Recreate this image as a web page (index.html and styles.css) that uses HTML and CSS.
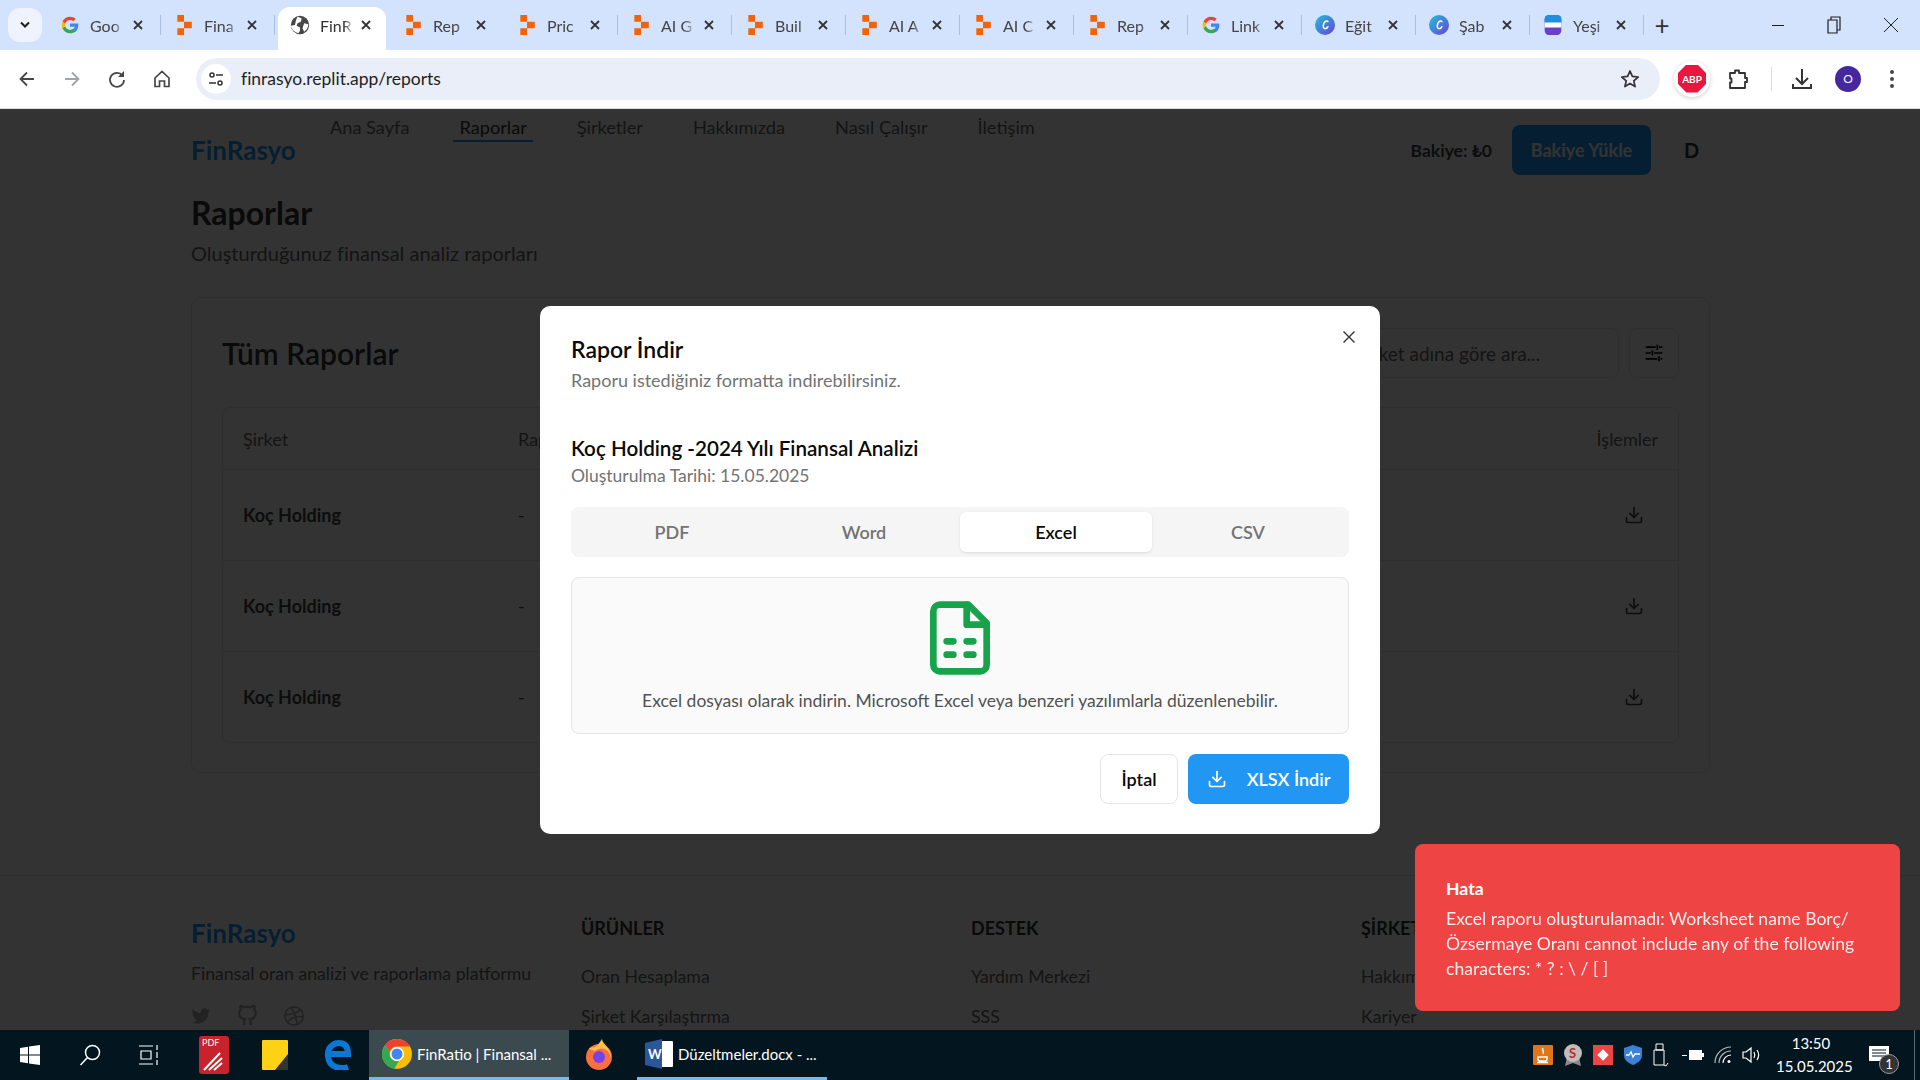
FILE: index.html
```html
<!DOCTYPE html>
<html lang="tr">

<head>
    <meta charset="UTF-8">
    <title>FinRatio | Finansal Analiz</title>
    <link rel="stylesheet" href="styles.css">
</head>

<body>
    <svg class="defs" width="0" height="0">
        <defs>
            <linearGradient id="canva-grad" x1="0" y1="0" x2="1" y2="1">
                <stop offset="0" stop-color="#1fc3d8" />
                <stop offset="1" stop-color="#6b3fd8" />
            </linearGradient>
        </defs>
        <symbol id="ic-replit" viewBox="0 0 16 18">
            <path fill="#f26207" d="M2 0h6v6H2zM8 6h7v6H8zM2 12h6v6H2z" />
        </symbol>
        <symbol id="ic-google" viewBox="0 0 24 24">
            <path fill="#4285f4" d="M22 12.2c0-.7-.1-1.400-.2-2H12v3.900h5.600c-.3 1.300-1 2.400-2.100 3.100v2.600h3.400c2-1.800 3.100-4.500 3.100-7.600z" />
            <path fill="#34a853" d="M12 22c2.800 0 5.100-.9 6.900-2.500l-3.400-2.600c-.9.600-2.100 1-3.500 1-2.700 0-5-1.800-5.800-4.300H3.100v2.700C4.800 19.800 8.200 22 12 22z" />
            <path fill="#fbbc05" d="M6.200 13.600c-.4-1.100-.4-2.200 0-3.300V7.600H3.100c-1.400 2.800-1.400 6 0 8.700z" />
            <path fill="#ea4335" d="M12 6c1.500 0 2.900.5 4 1.500l3-3C17.100 2.900 14.700 2 12 2 8.200 2 4.800 4.200 3.100 7.600l3.100 2.700C7 7.800 9.300 6 12 6z" />
        </symbol>
        <symbol id="ic-canva" viewBox="0 0 24 24">
            <circle cx="12" cy="12" r="12" fill="url(#canva-grad)" />
            <path fill="none" stroke="#fff" stroke-width="1.800" stroke-linecap="round" d="M15.500 8c-1-1.500-4-.5-5 2.500s-.5 6 1.500 6 3-1.500 3.500-2.500" />
        </symbol>
        <symbol id="ic-close" viewBox="0 0 12 12">
            <path fill="none" stroke="currentColor" stroke-width="1.800" d="M2 2l8 8M10 2l-8 8" />
        </symbol>
        <symbol id="ic-download" viewBox="0 0 24 24">
            <g fill="none" stroke="currentColor" stroke-width="2" stroke-linecap="round" stroke-linejoin="round">
                <path d="M21 15v4a2 2 0 0 1-2 2H5a2 2 0 0 1-2-2v-4" />
                <path d="M7 10l5 5 5-5" />
                <path d="M12 15V3" />
            </g>
        </symbol>
    </svg>

    <!-- sekmeler -->
    <div class="tabstrip">
        <button class="tab-search">
            <svg width="12" height="8" viewBox="0 0 12 8"><path fill="none" stroke="#1f1f1f" stroke-width="2" d="M2 1.500l4 4 4-4" /></svg>
        </button>
        <div class="tab"><svg class="tab-icon"><use href="#ic-google" /></svg><span class="tab-title">Goo</span><svg class="tab-x"><use href="#ic-close" /></svg></div>
        <div class="tab"><svg class="tab-icon"><use href="#ic-replit" /></svg><span class="tab-title">Fina</span><svg class="tab-x"><use href="#ic-close" /></svg></div>
        <div class="tab active">
            <svg class="tab-icon" viewBox="0 0 24 24"><circle cx="12" cy="12" r="11" fill="#474747" /><path fill="#fff" d="M9 2l5 2-1 4-4 2-1 3 4 2v4l-2 3c-4-1-8-4-9-9l5-1 1-5z M17 10l5 1c0 4-2 7-5 9l-2-4z" /></svg>
            <span class="tab-title">FinR</span><svg class="tab-x"><use href="#ic-close" /></svg>
        </div>
        <div class="tab no-sep"><svg class="tab-icon"><use href="#ic-replit" /></svg><span class="tab-title">Rep</span><svg class="tab-x"><use href="#ic-close" /></svg></div>
        <div class="tab"><svg class="tab-icon"><use href="#ic-replit" /></svg><span class="tab-title">Pric</span><svg class="tab-x"><use href="#ic-close" /></svg></div>
        <div class="tab"><svg class="tab-icon"><use href="#ic-replit" /></svg><span class="tab-title">AI G</span><svg class="tab-x"><use href="#ic-close" /></svg></div>
        <div class="tab"><svg class="tab-icon"><use href="#ic-replit" /></svg><span class="tab-title">Buil</span><svg class="tab-x"><use href="#ic-close" /></svg></div>
        <div class="tab"><svg class="tab-icon"><use href="#ic-replit" /></svg><span class="tab-title">AI A</span><svg class="tab-x"><use href="#ic-close" /></svg></div>
        <div class="tab"><svg class="tab-icon"><use href="#ic-replit" /></svg><span class="tab-title">AI C</span><svg class="tab-x"><use href="#ic-close" /></svg></div>
        <div class="tab"><svg class="tab-icon"><use href="#ic-replit" /></svg><span class="tab-title">Rep</span><svg class="tab-x"><use href="#ic-close" /></svg></div>
        <div class="tab"><svg class="tab-icon"><use href="#ic-google" /></svg><span class="tab-title">Link</span><svg class="tab-x"><use href="#ic-close" /></svg></div>
        <div class="tab"><svg class="tab-icon"><use href="#ic-canva" /></svg><span class="tab-title">Eğit</span><svg class="tab-x"><use href="#ic-close" /></svg></div>
        <div class="tab"><svg class="tab-icon"><use href="#ic-canva" /></svg><span class="tab-title">Şab</span><svg class="tab-x"><use href="#ic-close" /></svg></div>
        <div class="tab">
            <svg class="tab-icon" viewBox="0 0 24 24"><rect x="2" y="0" width="20" height="24" rx="5" fill="#6b3fc8" /><path fill="#1f8fe0" d="M2 5a5 5 0 0 1 5-5h10a5 5 0 0 1 5 5v5H2z" /><rect x="2" y="9" width="20" height="6" fill="#fff" /></svg>
            <span class="tab-title">Yeşi</span><svg class="tab-x"><use href="#ic-close" /></svg>
        </div>
        <button class="tab-new">+</button>
        <div class="win-controls">
            <svg width="14" height="14" viewBox="0 0 14 14"><path stroke="#1f1f1f" d="M1 7.500h12" /></svg>
            <svg width="14" height="18" viewBox="0 0 14 18"><path fill="none" stroke="#1f1f1f" stroke-width="1.200" d="M1 4h9v13H1zM4 4V1h9v13h-3" /></svg>
            <svg width="16" height="16" viewBox="0 0 16 16"><path stroke="#1f1f1f" d="M1 1l14 14M15 1L1 15" /></svg>
        </div>
    </div>

    <!-- adres cubugu -->
    <div class="toolbar">
        <div class="nav-btns">
            <svg width="20" height="20" viewBox="0 0 20 20"><path fill="none" stroke="#474747" stroke-width="1.800" d="M17 10H4M10 3.500L3.500 10l6.500 6.500" /></svg>
            <svg width="20" height="20" viewBox="0 0 20 20"><path fill="none" stroke="#a0a4aa" stroke-width="1.800" d="M3 10h13M10 3.500l6.500 6.500-6.500 6.500" /></svg>
            <svg width="20" height="20" viewBox="0 0 20 20"><path fill="none" stroke="#474747" stroke-width="1.800" d="M15.500 6.500A7 7 0 1 0 17 11" /><path fill="#474747" d="M17 2v6h-6z" /></svg>
            <svg width="20" height="20" viewBox="0 0 20 20"><path fill="none" stroke="#474747" stroke-width="1.700" d="M3 9l7-6.500L17 9v8.500h-4.500V12h-5v5.500H3z" /></svg>
        </div>
        <div class="omnibox">
            <span class="site-info">
                <svg width="16" height="16" viewBox="0 0 16 16"><g fill="none" stroke="#333" stroke-width="1.500"><circle cx="4" cy="4" r="2" /><circle cx="12" cy="12" r="2" /><path d="M8 4h7M1 12h7" /></g></svg>
            </span>
            <span class="url">finrasyo.replit.app/reports</span>
            <svg class="star" width="20" height="20" viewBox="0 0 20 20"><path fill="none" stroke="#333" stroke-width="1.700" stroke-linejoin="round" d="M10 2l2.400 5.400 5.800.6-4.400 3.900 1.300 5.700-5.100-3-5.100 3 1.300-5.700L1.800 8l5.800-.6z" /></svg>
        </div>
        <div class="ext-btns">
            <span class="abp"><i>ABP</i></span>
            <svg class="ext-puzzle" width="24" height="24" viewBox="0 0 24 24"><path fill="none" stroke="#333" stroke-width="1.800" stroke-linejoin="round" d="M4 6h5V3.500h4V6h6v5h2v4h-2v6H4v-5.500h1.500v-4H4z" /></svg>
            <span class="ext-sep"></span>
            <svg class="ext-dl" width="24" height="24" viewBox="0 0 24 24"><path fill="none" stroke="#333" stroke-width="2" d="M12 2v14M6 11l6 6 6-6M3 17v4h18v-4" /></svg>
            <span class="avatar">O</span>
            <svg class="ext-menu" width="6" height="20" viewBox="0 0 6 20"><g fill="#474747"><circle cx="3" cy="3" r="2" /><circle cx="3" cy="10" r="2" /><circle cx="3" cy="17" r="2" /></g></svg>
        </div>
    </div>

    <div class="viewport">
        <div class="site">
            <header class="site-header">
                <div class="logo">FinRasyo</div>
                <nav class="main-nav">
                    <a>Ana Sayfa</a>
                    <a class="current">Raporlar</a>
                    <a>Şirketler</a>
                    <a>Hakkımızda</a>
                    <a>Nasıl Çalışır</a>
                    <a>İletişim</a>
                </nav>
                <div class="balance">Bakiye: ₺0</div>
                <button class="btn-topup">Bakiye Yükle</button>
                <div class="user">D</div>
            </header>

            <h1 class="page-title">Raporlar</h1>
            <p class="page-sub">Oluşturduğunuz finansal analiz raporları</p>

            <section class="report-card">
                <div class="card-top">
                    <h2>Tüm Raporlar</h2>
                    <div class="search">Şirket adına göre ara...</div>
                    <button class="btn-filter">
                        <svg width="20" height="20" viewBox="0 0 24 24"><path fill="none" stroke="#000" stroke-width="2" d="M2 5h12M18 5h4M16 2v6M2 12h6M12 12h10M10 9v6M2 19h14M20 19h2M18 16v6" /></svg>
                    </button>
                </div>
                <div class="report-table">
                    <div class="t-row t-head"><span>Şirket</span><span>Rapor</span><span class="t-end">İşlemler</span></div>
                    <div class="t-row"><b>Koç Holding</b><span>-</span><svg class="t-end" width="20" height="20"><use href="#ic-download" /></svg></div>
                    <div class="t-row"><b>Koç Holding</b><span>-</span><svg class="t-end" width="20" height="20"><use href="#ic-download" /></svg></div>
                    <div class="t-row"><b>Koç Holding</b><span>-</span><svg class="t-end" width="20" height="20"><use href="#ic-download" /></svg></div>
                </div>
            </section>

            <footer class="site-footer">
                <div>
                    <div class="logo">FinRasyo</div>
                    <p class="foot-about">Finansal oran analizi ve raporlama platformu</p>
                    <div class="socials">
                        <svg width="20" height="20" viewBox="0 0 24 24"><path fill="#aaa" d="M23 5c-.8.400-1.700.6-2.600.7.900-.6 1.600-1.400 2-2.500-.9.500-1.900.9-2.900 1.100A4.600 4.600 0 0 0 11.700 8.500 13 13 0 0 1 2.300 3.700a4.600 4.600 0 0 0 1.400 6.100c-.7 0-1.400-.2-2-.6 0 2.200 1.500 4.100 3.700 4.600-.7.200-1.400.2-2.100.1.600 1.800 2.300 3.100 4.300 3.200A9.200 9.200 0 0 1 1 19a13 13 0 0 0 20-11.500c.8-.7 1.500-1.500 2-2.500z" /></svg>
                        <svg width="22" height="24" viewBox="0 0 24 24"><path fill="none" stroke="#aaa" stroke-width="2.400" d="M16 22v-3.900a3.400 3.400 0 0 0-.9-2.600c3.100-.4 6.400-1.500 6.400-7A5.400 5.400 0 0 0 20 4.800 5 5 0 0 0 19.900 1S18.700.6 16 2.500a13.400 13.400 0 0 0-7 0C6.300.6 5.100 1 5.100 1A5 5 0 0 0 5 4.800 5.400 5.400 0 0 0 3.500 8.500c0 5.400 3.300 6.600 6.400 7A3.400 3.400 0 0 0 9 18.100V22" /></svg>
                        <svg width="22" height="22" viewBox="0 0 24 24"><g fill="none" stroke="#aaa" stroke-width="1.800"><circle cx="12" cy="12" r="10" /><path d="M8.600 2.600c3.500 5 6 11 6.900 18.600M19.100 5c-3 3.800-8 5.500-16.900 5.500M21.900 13c-7-1.500-13 1-17.300 6" /></g></svg>
                    </div>
                </div>
                <div class="foot-col">
                    <h4>ÜRÜNLER</h4>
                    <a>Oran Hesaplama</a>
                    <a>Şirket Karşılaştırma</a>
                </div>
                <div class="foot-col">
                    <h4>DESTEK</h4>
                    <a>Yardım Merkezi</a>
                    <a>SSS</a>
                </div>
                <div class="foot-col">
                    <h4>ŞİRKET</h4>
                    <a>Hakkımızda</a>
                    <a>Kariyer</a>
                </div>
            </footer>
        </div>

        <!-- karartma + modal -->
        <div class="overlay">
            <div class="modal">
                <svg class="modal-x" width="14" height="14" viewBox="0 0 14 14"><path fill="none" stroke="#333" stroke-width="1.400" d="M1.500 1.500l11 11M12.500 1.500l-11 11" /></svg>
                <h3>Rapor İndir</h3>
                <p class="muted">Raporu istediğiniz formatta indirebilirsiniz.</p>
                <div class="report-name">Koç Holding -2024 Yılı Finansal Analizi</div>
                <p class="muted date">Oluşturulma Tarihi: 15.05.2025</p>
                <div class="format-tabs">
                    <button>PDF</button>
                    <button>Word</button>
                    <button class="on">Excel</button>
                    <button>CSV</button>
                </div>
                <div class="format-box">
                    <svg width="80" height="80" viewBox="0 0 24 24"><g fill="none" stroke="#16a34a" stroke-width="2" stroke-linecap="round" stroke-linejoin="round"><path d="M14.500 2H6a2 2 0 0 0-2 2v16a2 2 0 0 0 2 2h12a2 2 0 0 0 2-2V7.500z" /><path d="M14 2v6h6" /><path d="M8 13h2M14 13h2M8 17h2M14 17h2" /></g></svg>
                    <p>Excel dosyası olarak indirin. Microsoft Excel veya benzeri yazılımlarla düzenlenebilir.</p>
                </div>
                <div class="modal-actions">
                    <button class="btn-cancel">İptal</button>
                    <button class="btn-download"><svg width="20" height="20"><use href="#ic-download" /></svg>XLSX İndir</button>
                </div>
            </div>
        </div>

        <div class="toast">
            <div class="toast-title">Hata</div>
            <div class="toast-text">Excel raporu oluşturulamadı: Worksheet name Borç/ Özsermaye Oranı cannot include any of the following characters: * ? : \ / [ ]</div>
        </div>
    </div>

    <!-- gorev cubugu -->
    <div class="taskbar">
        <svg class="tb-start" width="20" height="20" viewBox="0 0 20 20"><path fill="#fff" d="M0 3l8-1.200v7.700H0zM9 1.600L20 0v9.500H9zM0 10.500h8v7.700L0 17zM9 10.500h11V20L9 18.400z" /></svg>
        <svg class="tb-search" width="22" height="22" viewBox="0 0 22 22"><g fill="none" stroke="#fff" stroke-width="1.500"><circle cx="13.500" cy="8.500" r="7" /><path d="M8.500 13.500L1.500 21" /></g></svg>
        <svg class="tb-view" width="20" height="20" viewBox="0 0 20 20"><path fill="none" stroke="#fff" stroke-width="1.200" d="M0 1h14M0 19h14M2 6h10v8H2zM18 0v5M18 7v6M18 15v5" /></svg>
        <span class="tb-pdf">PDF<svg width="22" height="20" viewBox="0 0 22 20"><path fill="none" stroke="#fff" stroke-width="2" d="M2 19L18 2M7 19L20 7M12 19l8-7" /></svg></span>
        <svg class="tb-sticky" width="26" height="30" viewBox="0 0 26 30"><rect width="26" height="30" rx="1" fill="#fcd116" /><path fill="#333" d="M26 14v16H13z" /></svg>
        <svg class="tb-edge" width="28" height="30" viewBox="0 0 28 30"><path fill="none" stroke="#0a78d4" stroke-width="6" d="M25 27c-6 2-19 2-20-11C4 6 12 3 16 3c7 0 9 5 9 11H7" /></svg>
        <div class="tb-app tb-chrome">
            <svg width="30" height="30" viewBox="0 0 30 30"><circle cx="15" cy="15" r="15" fill="#fbbc05" /><path fill="#ea4335" d="M15 0a15 15 0 0 1 13 7.500H15a7.500 7.500 0 0 0-7 5L2.700 6.500A15 15 0 0 1 15 0z" /><path fill="#34a853" d="M2.700 6.500L8 12.500a7.500 7.500 0 0 0 9 9.500L12 30A15 15 0 0 1 2.700 6.500z" /><circle cx="15" cy="15" r="7" fill="#fff" /><circle cx="15" cy="15" r="5.500" fill="#4285f4" /></svg>
            <span>FinRatio | Finansal ...</span>
        </div>
        <svg class="tb-firefox" width="30" height="32" viewBox="0 0 30 32"><circle cx="15" cy="18" r="13" fill="#f9703e" /><path fill="#ffbd4f" d="M5 9c2 0 4-1 6-1 3-2 5-5 7-8 0 5 10 9 9 19-1-4-3-8-7-9-3-1-7 0-9 2-2-1-5-1-6-3z" /><circle cx="15" cy="18" r="6" fill="#7542e5" /></svg>
        <div class="tb-app tb-word">
            <svg width="28" height="30" viewBox="0 0 28 30"><rect x="8" y="2" width="20" height="26" rx="1" fill="#fff" /><path fill="#2b579a" d="M0 4l17-4v30L0 26z" /><text class="tb-w" x="3" y="20">W</text></svg>
            <span>Düzeltmeler.docx - ...</span>
        </div>
        <div class="tray">
            <svg width="20" height="20" viewBox="0 0 20 20"><rect width="20" height="20" rx="1" fill="#e0761c" /><path fill="none" stroke="#fff" stroke-width="1.500" d="M5 12h9v2a2 2 0 0 1-2 2H7a2 2 0 0 1-2-2zM10 3c-2 2 2 3 0 6M4 17.500h11" /></svg>
            <svg width="20" height="24" viewBox="0 0 20 24"><path fill="#8a8a8a" d="M4 14l-2 9 8-3 8 3-2-9z" /><circle cx="10" cy="10" r="9" fill="#c4bcbc" /><text class="tray-s" x="6" y="15">S</text></svg>
            <span class="tray-red"><i></i></span>
            <svg width="20" height="20" viewBox="0 0 20 20"><path fill="#3b82d6" d="M10 0l9 3v7c0 5-4 8-9 10-5-2-9-5-9-10V3z" /><path fill="none" stroke="#fff" stroke-width="1.300" d="M3 10h3l2-3 2 5 2-3h5" /></svg>
            <svg width="16" height="24" viewBox="0 0 16 24"><path fill="none" stroke="#fff" d="M3 1h7v6H3zM1 7h10v15H1zM11 22l2 1 2-3" /></svg>
            <svg class="tray-bat" width="22" height="14" viewBox="0 0 22 14"><path fill="#fff" d="M7 2h13v10H7zM20 5h2v4h-2zM0 7h5v1H0z" /></svg>
            <svg width="18" height="18" viewBox="0 0 18 18"><g fill="none" stroke="#fff" stroke-width="1.200"><path d="M1 17A16 16 0 0 1 17 1M5 17A12 12 0 0 1 17 5" opacity=".7" /><path d="M9 17a8 8 0 0 1 8-8" /></g><circle cx="15" cy="15.500" r="1.500" fill="#fff" /></svg>
            <svg width="20" height="18" viewBox="0 0 20 18"><path fill="none" stroke="#fff" stroke-width="1.200" d="M1 6h3l5-4v14l-5-4H1zM12 6c1 2 1 4 0 6M15 4c2 3 2 7 0 10" /></svg>
            <div class="clock"><div>13:50</div><div>15.05.2025</div></div>
            <span class="tray-note"><svg width="20" height="18" viewBox="0 0 20 18"><path fill="#fff" d="M0 0h20v15H0z" /><path stroke="#03161f" d="M3 4h14M3 7h14M3 10h14" /></svg><b>1</b></span>
        </div>
        <span class="tb-edge-line"></span>
    </div>
</body>

</html>
```

FILE: styles.css
```css
* {
    box-sizing: border-box;
}

html,
body {
    margin: 0;
    height: 100%;
}

body {
    width: 1920px;
    height: 1080px;
    overflow: hidden;
    display: flex;
    flex-direction: column;
    font-family: Lato, "Noto Sans", "Liberation Sans", sans-serif;
    color: #333;
}

h1,
h2,
h3,
h4,
p {
    margin: 0;
}

button {
    font: inherit;
    color: inherit;
    border: none;
    padding: 0;
    background: none;
    cursor: pointer;
}

.defs {
    position: absolute;
}

/* sekmeler */
.tabstrip {
    height: 50px;
    flex: none;
    display: flex;
    align-items: flex-end;
    padding-left: 8px;
    background: #d3e3fd;
}

.tab-search {
    width: 34px;
    height: 34px;
    margin: 0 5px 8px 0;
    border-radius: 12px;
    background: #eef3fe;
    display: flex;
    align-items: center;
    justify-content: center;
}

.tab {
    position: relative;
    width: 114px;
    height: 43px;
    padding: 0 0 7px 13px;
    display: flex;
    align-items: center;
    font-size: 16px;
    color: #444;
}

.tab::after {
    content: "";
    position: absolute;
    right: 0;
    top: 8px;
    height: 20px;
    width: 1px;
    background: #a8c0e8;
}

.tab.no-sep::after,
.tab.active::after {
    display: none;
}

.tab.active {
    background: #fff;
    border-radius: 12px 12px 0 0;
    margin: 0 7px 0 3px;
    width: 108px;
    padding-left: 12px;
    color: #333;
}

.tab.active + .tab {
    margin-left: -3px;
}

.tab-icon {
    width: 20px;
    height: 20px;
    flex: none;
}

.tab-title {
    width: 34px;
    margin-left: 10px;
    overflow: hidden;
    white-space: nowrap;
    -webkit-mask-image: linear-gradient(to right, #000 70%, transparent);
    mask-image: linear-gradient(to right, #000 70%, transparent);
}

.tab-x {
    width: 12px;
    height: 12px;
    margin-left: 8px;
    color: #333;
}

.tab.active .tab-x {
    margin-left: 6px;
}

.tab-new {
    margin: 0 0 7px 4px;
    font-size: 26px;
    line-height: 36px;
    height: 36px;
    width: 28px;
    color: #333;
}

.win-controls {
    margin-left: auto;
    height: 50px;
    padding-right: 21px;
    display: flex;
    align-items: center;
    gap: 42px;
}

/* adres cubugu */
.toolbar {
    height: 59px;
    flex: none;
    display: flex;
    align-items: center;
    background: #fff;
    padding: 0 18px 1px 17px;
    border-bottom: 1px solid #ddd;
}

.nav-btns {
    display: flex;
    gap: 25px;
    margin-right: 24px;
}

.omnibox {
    width: 1464px;
    height: 42px;
    flex: none;
    border-radius: 21px;
    background: #e9eef8;
    display: flex;
    align-items: center;
    padding: 0 20px 0 5px;
    font-size: 17.5px;
    color: #1f1f1f;
}

.site-info {
    width: 30px;
    height: 30px;
    border-radius: 50%;
    background: #fff;
    display: flex;
    align-items: center;
    justify-content: center;
    margin-right: 10px;
}

.star {
    margin-left: auto;
}

.ext-btns {
    display: flex;
    align-items: center;
    margin-left: 16px;
}

.abp {
    width: 32px;
    height: 32px;
    padding: 2px;
    border-radius: 50%;
    background: #fff;
    box-shadow: 0 0 0 2px #fff, 0 1px 4px 2px rgba(0, 0, 0, 0.2);
}

.abp i {
    display: block;
    height: 28px;
    background: #e8173f;
    clip-path: polygon(30% 0, 70% 0, 100% 30%, 100% 70%, 70% 100%, 30% 100%, 0 70%, 0 30%);
    color: #fff;
    font-size: 10px;
    font-style: normal;
    font-weight: 700;
    line-height: 28px;
    text-align: center;
}

.ext-puzzle {
    margin-left: 18px;
}

.ext-sep {
    width: 1px;
    height: 24px;
    margin-left: 21px;
    background: #d5dbe6;
}

.ext-dl {
    margin-left: 18px;
}

.avatar {
    width: 26px;
    height: 26px;
    margin-left: 21px;
    border-radius: 50%;
    background: #4527a0;
    color: #fff;
    font-size: 12px;
    line-height: 26px;
    text-align: center;
}

.ext-menu {
    margin-left: 28px;
}

/* sayfa */
.viewport {
    flex: 1;
    position: relative;
    overflow: hidden;
    background: #fff;
}

.site {
    width: 1519px;
    margin-left: 191px;
}

.site-header {
    height: 82px;
    display: flex;
    align-items: center;
}

.logo {
    font-size: 26px;
    font-weight: 700;
    color: #2196f3;
}

.site-header .logo {
    width: 133px;
}

.main-nav {
    align-self: flex-start;
    display: flex;
    gap: 38px;
    margin-top: 7px;
    font-size: 18.2px;
    color: #666;
}

.main-nav a {
    padding: 0 6px 2px;
    height: 26px;
    border-bottom: 2px solid transparent;
}

.main-nav a.current {
    color: #333;
    border-color: #2196f3;
}

.balance {
    margin-left: auto;
    font-size: 17.5px;
    font-weight: 700;
    color: #444;
}

.btn-topup {
    width: 139px;
    height: 50px;
    margin-left: 20px;
    border-radius: 8px;
    background: #2196f3;
    color: #fff;
    font-size: 18px;
    font-weight: 700;
}

.user {
    width: 59px;
    padding-left: 33px;
    font-size: 20px;
    font-weight: 700;
}

.page-title {
    font-size: 32px;
    line-height: 44px;
}

.page-sub {
    font-size: 20px;
    line-height: 30px;
    margin-top: 3px;
    color: #666;
}

.report-card {
    height: 476px;
    margin-top: 29px;
    padding: 30px 30px 0;
    border: 1px solid #e5e5e5;
    border-radius: 10px;
}

.card-top {
    display: flex;
    align-items: center;
    gap: 10px;
    height: 50px;
}

.card-top h2 {
    flex: 1;
    font-size: 30px;
    font-weight: 600;
}

.search {
    width: 285px;
    height: 50px;
    padding-left: 22px;
    border: 1px solid #e5e5e5;
    border-radius: 8px;
    font-size: 19px;
    line-height: 50px;
    color: #666;
}

.btn-filter {
    width: 50px;
    height: 50px;
    border: 1px solid #e5e5e5;
    border-radius: 8px;
    display: flex;
    align-items: center;
    justify-content: center;
}

.report-table {
    margin-top: 29px;
    border: 1px solid #e5e5e5;
    border-radius: 8px;
}

.t-row {
    height: 91px;
    padding: 0 20px;
    display: grid;
    grid-template-columns: 275px 1fr auto;
    align-items: center;
    border-top: 1px solid #e5e5e5;
    font-size: 18px;
    color: #444;
}

.t-row b {
    font-weight: 700;
}

.t-head {
    height: 61px;
    border-top: none;
    color: #666;
}

.t-row svg.t-end {
    margin-right: 14px;
}

.site-footer {
    margin-top: 102px;
    margin-left: -191px;
    width: 1920px;
    padding: 41px 0 0 191px;
    border-top: 1px solid #e5e5e5;
    display: grid;
    grid-template-columns: repeat(4, 390px);
}

.foot-about {
    font-size: 17.7px;
    margin-top: 14px;
    color: #666;
}

.socials {
    display: flex;
    align-items: center;
    gap: 25px;
    margin-top: 20px;
}

.foot-col {
    display: flex;
    flex-direction: column;
    font-size: 17.7px;
    color: #666;
}

.foot-col h4 {
    font-size: 18px;
    font-weight: 700;
    color: #333;
    margin: 0 0 18px;
}

.foot-col a {
    line-height: 40px;
}

/* karartma + modal */
.overlay {
    position: absolute;
    inset: 0;
    background: rgba(0, 0, 0, 0.8);
    display: flex;
    align-items: center;
    justify-content: center;
}

.modal {
    position: relative;
    width: 840px;
    height: 528px;
    padding: 27px 31px 0;
    border-radius: 10px;
    background: #fff;
    color: #0a0a0a;
}

.modal-x {
    position: absolute;
    top: 24px;
    right: 24px;
}

.modal h3 {
    font-size: 23px;
    font-weight: 600;
    line-height: 32px;
}

.muted {
    font-size: 18px;
    line-height: 28px;
    color: #737373;
}

.modal h3 + .muted {
    margin-top: 1px;
}

.muted.date {
    font-size: 17.5px;
    margin-top: -1px;
}

.report-name {
    font-size: 20.6px;
    font-weight: 600;
    line-height: 30px;
    margin-top: 39px;
}

.format-tabs {
    display: grid;
    grid-template-columns: repeat(4, 1fr);
    height: 50px;
    margin-top: 17px;
    padding: 5px;
    border-radius: 8px;
    background: #f5f5f5;
    font-size: 18px;
    font-weight: 600;
    color: #737373;
}

.format-tabs .on {
    background: #fff;
    border-radius: 6px;
    color: #0a0a0a;
    box-shadow: 0 1px 3px rgba(0, 0, 0, 0.1);
}

.format-box {
    height: 157px;
    margin-top: 20px;
    padding-top: 20px;
    border: 1px solid #e5e5e5;
    border-radius: 8px;
    background: #fafafa;
    display: flex;
    flex-direction: column;
    align-items: center;
    font-size: 17.5px;
    color: #525252;
}

.format-box p {
    margin-top: 12px;
}

.modal-actions {
    display: flex;
    justify-content: flex-end;
    gap: 10px;
    margin-top: 20px;
    font-size: 18px;
    font-weight: 600;
}

.btn-cancel {
    width: 78px;
    height: 50px;
    border: 1px solid #e5e5e5;
    border-radius: 8px;
    background: #fff;
    color: #0a0a0a;
}

.btn-download {
    width: 161px;
    height: 50px;
    border-radius: 8px;
    background: #2196f3;
    color: #fff;
    display: flex;
    align-items: center;
    justify-content: center;
    gap: 20px;
}

.toast {
    position: absolute;
    right: 20px;
    bottom: 19px;
    width: 485px;
    height: 167px;
    padding: 32px 30px 0 31px;
    border-radius: 8px;
    background: #ef4444;
    color: #fff;
    font-size: 17.6px;
}

.toast-title {
    font-weight: 700;
    line-height: 26px;
}

.toast-text {
    line-height: 25px;
    margin-top: 4px;
    opacity: 0.9;
}

/* gorev cubugu */
.taskbar {
    height: 50px;
    flex: none;
    display: flex;
    align-items: center;
    background: #03161f;
    color: #fff;
    font-size: 15px;
}

.tb-start {
    margin-left: 20px;
}

.tb-search {
    margin-left: 39px;
}

.tb-view {
    margin-left: 38px;
}

.tb-pdf {
    width: 30px;
    height: 38px;
    margin-left: 40px;
    padding: 2px 0 0 3px;
    border-radius: 3px;
    background: #c8232c;
    font-size: 9px;
    line-height: 10px;
    overflow: hidden;
}

.tb-pdf svg {
    display: block;
    margin-top: 3px;
}

.tb-sticky {
    margin-left: 33px;
}

.tb-edge {
    margin-left: 35px;
}

.tb-app {
    height: 50px;
    display: flex;
    align-items: center;
    gap: 5px;
    white-space: nowrap;
    border-bottom: 3px solid #76b9ed;
}

.tb-chrome {
    width: 200px;
    margin-left: 18px;
    padding-left: 13px;
    background: #3b4a4f;
}

.tb-firefox {
    margin-left: 15px;
}

.tb-word {
    width: 190px;
    margin-left: 23px;
    padding-left: 8px;
}

.tb-w {
    fill: #fff;
    font-size: 13px;
    font-weight: 700;
}

.tray {
    margin-left: auto;
    display: flex;
    align-items: center;
    gap: 10px;
    padding-right: 25px;
}

.tray-s {
    fill: #a33;
    font-size: 13px;
    font-weight: 700;
}

.tray-red {
    width: 20px;
    height: 20px;
    background: #ef4444;
    display: flex;
    align-items: center;
    justify-content: center;
}

.tray-red i {
    width: 8px;
    height: 8px;
    background: #fff;
    transform: rotate(45deg);
}

.tray-bat {
    margin-left: 3px;
}

.clock {
    width: 70px;
    margin: 0 13px 0 4px;
    text-align: center;
    font-size: 15px;
    line-height: 23px;
    white-space: nowrap;
}

.tray-note {
    position: relative;
    display: flex;
}

.tray-note b {
    position: absolute;
    right: -10px;
    bottom: -10px;
    width: 20px;
    height: 20px;
    border: 1px solid #999;
    border-radius: 50%;
    background: #333;
    font-size: 13px;
    font-weight: 400;
    line-height: 18px;
    text-align: center;
}

.tb-edge-line {
    width: 1px;
    height: 50px;
    margin-right: 5px;
    background: #5a6a70;
}
```
